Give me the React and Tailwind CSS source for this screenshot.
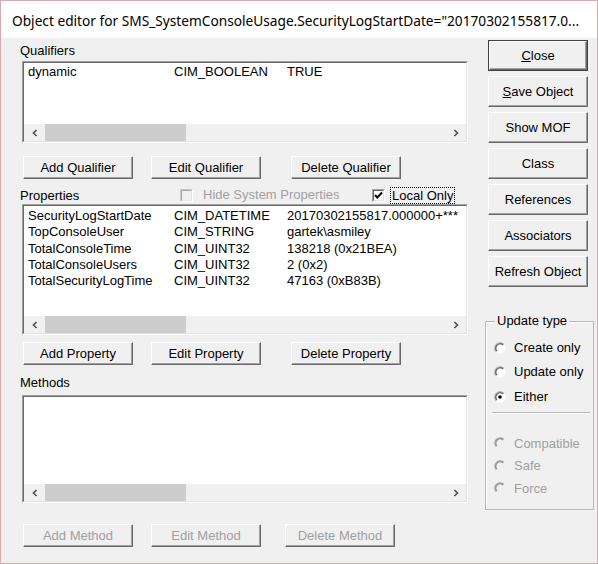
import React from 'react'

const qualifiers = [['dynamic', 'CIM_BOOLEAN', 'TRUE']]

const properties = [
  ['SecurityLogStartDate', 'CIM_DATETIME', '20170302155817.000000+***'],
  ['TopConsoleUser', 'CIM_STRING', 'gartek\\asmiley'],
  ['TotalConsoleTime', 'CIM_UINT32', '138218 (0x21BEA)'],
  ['TotalConsoleUsers', 'CIM_UINT32', '2 (0x2)'],
  ['TotalSecurityLogTime', 'CIM_UINT32', '47163 (0xB83B)'],
]

function Chevron({ right }) {
  return (
    <svg width="6" height="8" viewBox="0 0 6 8">
      <path
        d={right ? 'M1.5 1 L4.5 4 L1.5 7' : 'M4.5 1 L1.5 4 L4.5 7'}
        fill="none"
        stroke="#505050"
        strokeWidth="1.6"
      />
    </svg>
  )
}

function ScrollBar() {
  return (
    <div className="h-[17px] flex items-stretch bg-[#f0f0f0] shrink-0">
      <div className="w-[21px] flex items-center justify-center">
        <Chevron />
      </div>
      <div className="w-[141px] bg-[#cdcdcd]" />
      <div className="flex-1" />
      <div className="w-[21px] flex items-center justify-center">
        <Chevron right />
      </div>
    </div>
  )
}

function ListBox({ rows, className = '', pt = 'pt-[1px]' }) {
  return (
    <div className={`border border-t-[#a0a0a0] border-l-[#a0a0a0] border-r-white border-b-white ${className}`}>
      <div className="h-full border border-t-[#696969] border-l-[#696969] border-r-[#e3e3e3] border-b-[#e3e3e3] bg-white flex flex-col">
        <div className={`flex-1 overflow-hidden pl-[4px] ${pt}`}>
          {rows.map((r) => (
            <div key={r[0]} className="flex h-[16.25px] leading-[16px] whitespace-nowrap">
              <span className="w-[146px]">{r[0]}</span>
              <span className="w-[113px]">{r[1]}</span>
              <span>{r[2]}</span>
            </div>
          ))}
        </div>
        <ScrollBar />
      </div>
    </div>
  )
}

function Btn({ children, className = '', disabled, w = 'w-[110px]', h = 'h-[23px]' }) {
  return (
    <div
      className={`${w} ${h} shrink-0 bg-[#f0f0f0] border border-t-white border-l-white border-r-[#696969] border-b-[#696969] shadow-[inset_-1px_-1px_0_#a0a0a0] flex items-center justify-center ${
        disabled ? 'text-[#a0a0a0]' : 'text-black'
      } ${className}`}
    >
      {children}
    </div>
  )
}

function CheckBox({ checked, disabled }) {
  return (
    <div
      className={`w-[13px] h-[13px] shrink-0 border ${
        disabled
          ? 'border-t-[#c8c8c8] border-l-[#c8c8c8] border-r-white border-b-white'
          : 'border-t-[#a0a0a0] border-l-[#a0a0a0] border-r-white border-b-white'
      }`}
    >
      <div
        className={`w-full h-full border ${
          disabled
            ? 'border-t-[#a8a8a8] border-l-[#a8a8a8] border-r-[#e3e3e3] border-b-[#e3e3e3] bg-[#f0f0f0]'
            : 'border-t-[#696969] border-l-[#696969] border-r-[#e3e3e3] border-b-[#e3e3e3] bg-white'
        } flex items-center justify-center`}
      >
        {checked && (
          <svg width="9" height="9" viewBox="0 0 9 9">
            <path d="M1 4 L3.3 6.5 L8 1.5" fill="none" stroke="#000" strokeWidth="2" />
          </svg>
        )}
      </div>
    </div>
  )
}

function Radio({ checked, disabled }) {
  return (
    <svg width="12" height="12" viewBox="0 0 12 12" className="shrink-0">
      <circle cx="6" cy="6" r="5.5" fill={disabled ? '#f0f0f0' : '#ffffff'} />
      <path d="M2.29 9.71 A5.25 5.25 0 0 1 9.71 2.29" fill="none" stroke="#a0a0a0" strokeWidth="1.2" />
      <path d="M3 9 A4.25 4.25 0 0 1 9 3" fill="none" stroke={disabled ? '#8a8a8a' : '#505050'} strokeWidth="1.1" />
      {checked && <circle cx="6" cy="6" r="1.8" fill="#000" />}
    </svg>
  )
}

function RadioRow({ label, checked, disabled, h = 'h-[24px]' }) {
  return (
    <div className={`${h} flex items-center pl-[8px] gap-[8px] ${disabled ? 'text-[#a0a0a0]' : 'text-black'}`}>
      <Radio checked={checked} disabled={disabled} />
      <span>{label}</span>
    </div>
  )
}

export default function App() {
  return (
    <div
      className="w-[598px] h-[564px] border border-[#d9a9ad] flex flex-col bg-[#f0f0f0] text-[13px] text-black overflow-hidden"
      style={{ fontFamily: '"Liberation Sans", Arial, sans-serif' }}
    >
      {/* Title bar */}
      <div
        className="h-[37px] shrink-0 bg-white flex items-center pl-[11px] pt-[3px] text-[13.7px] whitespace-nowrap overflow-hidden"
        style={{ fontFamily: '"Noto Sans", sans-serif' }}
      >
        Object editor for SMS_SystemConsoleUsage.SecurityLogStartDate="20170302155817.0...
      </div>

      <div className="flex-1 flex pl-[19px]">
        {/* Left column */}
        <div className="w-[448px] flex flex-col">
          <div className="mt-[5px] h-[15px] leading-[15px]">Qualifiers</div>
          <ListBox rows={qualifiers} className="mt-[3px] ml-[2px] h-[82px]" />
          <div className="mt-[13px] flex">
            <Btn className="ml-[3px]">Add Qualifier</Btn>
            <Btn className="ml-[18px]">Edit Qualifier</Btn>
            <Btn className="ml-[30px]">Delete Qualifier</Btn>
          </div>

          <div className="mt-[7px] h-[18px] flex items-center">
            <span className="w-[160px] pt-[2px]">Properties</span>
            <CheckBox disabled />
            <span className="ml-[10px] w-[169px] text-[#a0a0a0]">Hide System Properties</span>
            <CheckBox checked />
            <span className="ml-[5px] border border-dotted border-black px-[1px] leading-[15px]">Local Only</span>
          </div>
          <ListBox rows={properties} pt="pt-[2px]" className="ml-[2px] h-[131px]" />
          <div className="mt-[7px] flex">
            <Btn className="ml-[3px]">Add Property</Btn>
            <Btn className="ml-[18px]">Edit Property</Btn>
            <Btn className="ml-[30px]">Delete Property</Btn>
          </div>

          <div className="mt-[10px] h-[15px] leading-[15px]">Methods</div>
          <ListBox rows={[]} className="mt-[5px] ml-[2px] h-[108px]" />
          <div className="mt-[21px] flex">
            <Btn disabled className="ml-[3px]">Add Method</Btn>
            <Btn disabled className="ml-[18px]">Edit Method</Btn>
            <Btn disabled className="ml-[24px]">Delete Method</Btn>
          </div>
        </div>

        {/* Right column */}
        <div className="ml-[17px] w-[109px] flex flex-col">
          <div className="mt-[2px] ml-[3px] flex flex-col gap-[5px]">
            <div className="w-[100px] h-[31px] border border-[#404040]">
              <Btn w="w-full" h="h-full">
                <span><span className="underline">C</span>lose</span>
              </Btn>
            </div>
            <Btn w="w-[100px]" h="h-[31px]">
              <span><span className="underline">S</span>ave Object</span>
            </Btn>
            <Btn w="w-[100px]" h="h-[31px]">Show MOF</Btn>
            <Btn w="w-[100px]" h="h-[31px]">Class</Btn>
            <Btn w="w-[100px]" h="h-[31px]">References</Btn>
            <Btn w="w-[100px]" h="h-[31px]">Associators</Btn>
            <Btn w="w-[100px]" h="h-[31px]">Refresh Object</Btn>
          </div>

          <div className="mt-[34px] relative h-[189px] border border-[#b9b9b9] shadow-[inset_1px_1px_0_#ffffff] pt-[14px]">
            <span className="absolute -top-[9px] left-[9px] px-[2px] bg-[#f0f0f0] leading-[16px]">Update type</span>
            <RadioRow label="Create only" />
            <RadioRow label="Update only" />
            <RadioRow label="Either" checked h="h-[25px]" />
            <div className="mt-[3px] ml-[6px] mr-[3px] border-t border-[#b9b9b9] border-b border-b-white" />
            <div className="mt-[18px]">
              <RadioRow label="Compatible" disabled h="h-[22.5px]" />
              <RadioRow label="Safe" disabled h="h-[22.5px]" />
              <RadioRow label="Force" disabled h="h-[22.5px]" />
            </div>
          </div>
        </div>
      </div>
    </div>
  )
}
